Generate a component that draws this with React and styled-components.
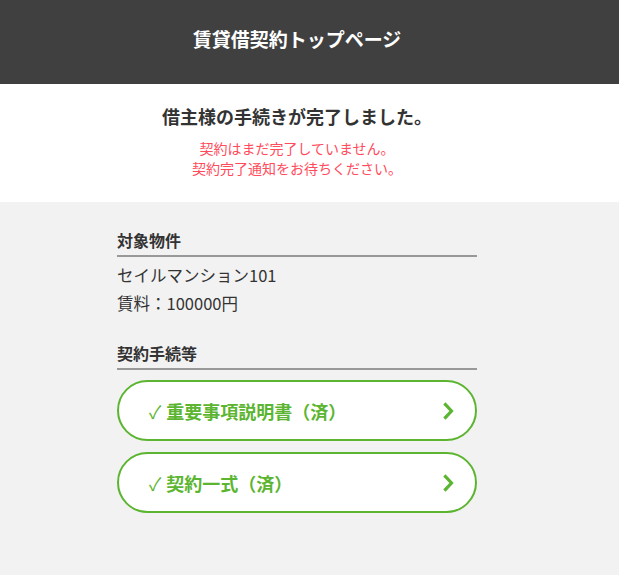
import styled, { createGlobalStyle } from 'styled-components'

const GlobalStyle = createGlobalStyle`
  html, body {
    margin: 0;
    padding: 0;
    background: #f2f2f2;
    font-family: "Noto Sans CJK JP", "Noto Sans", sans-serif;
    color: #333;
  }
`

// full-width colour bands, content kept in a 594px centred frame
const Band = styled.div`
  background: ${p => p.bg};
`

const Frame = styled.div`
  width: 594px;
`

const Header = styled.header`
  height: 84px;
  color: #fff;
  display: flex;
  justify-content: center;
  padding-top: 25px;
  box-sizing: border-box;
  font-size: 19px;
  font-weight: bold;
  line-height: 28px;
`

const Notice = styled.section`
  text-align: center;
  padding-top: 19px;
  height: 118px;
  box-sizing: border-box;
`

const NoticeTitle = styled.h1`
  margin: 0 0 9px;
  font-size: 18px;
  line-height: 26px;
  font-weight: bold;
  color: #333;
`

const Warning = styled.p`
  margin: 0;
  font-size: 14px;
  line-height: 20px;
  color: #ff4b5c;
`

const Main = styled.main`
  width: 360px;
  margin: 0 auto;
  padding-top: 25px;
`

const SectionTitle = styled.h2`
  margin: 0;
  font-size: 16px;
  font-weight: bold;
  line-height: 26px;
  padding-bottom: 2px;
  border-bottom: 2px solid #999;
  color: #333;
`

const Info = styled.p`
  margin: 0;
  font-size: 16.5px;
  line-height: 28px;
  color: #333;
  &:first-of-type {
    margin-top: 4px;
  }
`

const Spacer = styled.div`
  height: 23px;
`

const Steps = styled.div`
  display: flex;
  flex-direction: column;
  gap: 11px;
  margin-top: 10px;
`

const StepButton = styled.a`
  display: flex;
  align-items: center;
  justify-content: space-between;
  height: 61px;
  box-sizing: border-box;
  border: 2px solid #5cb531;
  border-radius: 31px;
  background: #fff;
  padding: 0 19px 0 30px;
  color: #5cb531;
  font-size: 18px;
  font-weight: bold;
  text-decoration: none;
  cursor: pointer;
`

const Check = styled.span`
  font-weight: normal;
  margin-right: 5px;
`

const Chevron = () => (
  <svg width="14" height="20" viewBox="0 0 14 20">
    <path d="M3.5 3.5 L9.5 10 L3.5 16.5" fill="none" stroke="#5cb531" strokeWidth="3.2" strokeLinecap="square" />
  </svg>
)

const steps = ['重要事項説明書（済）', '契約一式（済）']

export default function App () {
  return (
    <>
      <GlobalStyle />
      <Band bg="#404040">
        <Frame>
          <Header>賃貸借契約トップページ</Header>
        </Frame>
      </Band>
      <Band bg="#fff">
        <Frame>
          <Notice>
            <NoticeTitle>借主様の手続きが完了しました。</NoticeTitle>
            <Warning>契約はまだ完了していません。</Warning>
            <Warning>契約完了通知をお待ちください。</Warning>
          </Notice>
        </Frame>
      </Band>
      <Frame>
        <Main>
          <SectionTitle>対象物件</SectionTitle>
          <Info>セイルマンション101</Info>
          <Info>賃料：100000円</Info>
          <Spacer />
          <SectionTitle>契約手続等</SectionTitle>
          <Steps>
            {steps.map(s => (
              <StepButton key={s}>
                <span><Check>✓</Check>{s}</span>
                <Chevron />
              </StepButton>
            ))}
          </Steps>
        </Main>
      </Frame>
    </>
  )
}
